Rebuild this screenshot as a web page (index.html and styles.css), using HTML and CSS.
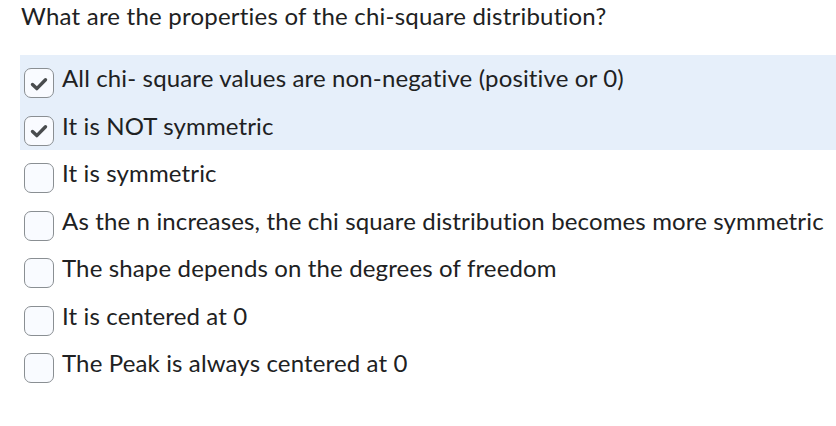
FILE: index.html
```html
<!DOCTYPE html>
<html lang="en">
<head>
<meta charset="utf-8">
<title>Chi-square question</title>
<link rel="stylesheet" href="styles.css">
</head>
<body>
<div class="question">
  <h2 class="prompt">What are the properties of the chi-square distribution?</h2>
  <ul class="options">
    <li class="option selected">
      <span class="box"><svg viewBox="0 0 30 30" width="30" height="30"><path d="M8.5 16.5 L12.8 20.6 L21.5 11.8" fill="none" stroke="#494c4e" stroke-width="3.4" stroke-linecap="round" stroke-linejoin="round"/></svg></span>
      <span class="label">All chi- square values are non-negative (positive or 0)</span>
    </li>
    <li class="option selected">
      <span class="box"><svg viewBox="0 0 30 30" width="30" height="30"><path d="M8.5 16.5 L12.8 20.6 L21.5 11.8" fill="none" stroke="#494c4e" stroke-width="3.4" stroke-linecap="round" stroke-linejoin="round"/></svg></span>
      <span class="label">It is NOT symmetric</span>
    </li>
    <li class="option"><span class="box"></span><span class="label">It is symmetric</span></li>
    <li class="option"><span class="box"></span><span class="label">As the n increases, the chi square distribution becomes more symmetric</span></li>
    <li class="option"><span class="box"></span><span class="label">The shape depends on the degrees of freedom</span></li>
    <li class="option"><span class="box"></span><span class="label">It is centered at 0</span></li>
    <li class="option"><span class="box"></span><span class="label">The Peak is always centered at 0</span></li>
  </ul>
</div>
</body>
</html>
```

FILE: styles.css
```css
html, body {
  margin: 0;
  padding: 0;
  background: #ffffff;
}

body {
  font-family: Lato, "Noto Sans", sans-serif;
  color: #202122;
  font-variant-ligatures: none;
}

.prompt {
  margin: 0;
  padding: 1px 0 0 21px;
  font-size: 24px;
  font-weight: 400;
  line-height: 29px;
  letter-spacing: 0.22px;
  height: 55px;
  box-sizing: border-box;
}

.options {
  list-style: none;
  margin: 0 0 0 20px;
  padding: 0;
}

.option {
  display: flex;
  align-items: flex-start;
  height: 47.5px;
  box-sizing: border-box;
  padding-top: 8px;
  padding-left: 4px;
}

.option.selected {
  background: #e6effa;
}

.box {
  flex: none;
  width: 30px;
  height: 30px;
  margin-top: 5px;
  box-sizing: border-box;
  border: 1.5px solid #8a8f93;
  border-radius: 7px;
  background: #f9fbff;
  position: relative;
}

.box svg {
  position: absolute;
  left: -1.5px;
  top: -1.5px;
}

.label {
  margin-left: 8px;
  font-size: 24px;
  line-height: 29px;
  letter-spacing: 0.14px;
  white-space: nowrap;
}
```
